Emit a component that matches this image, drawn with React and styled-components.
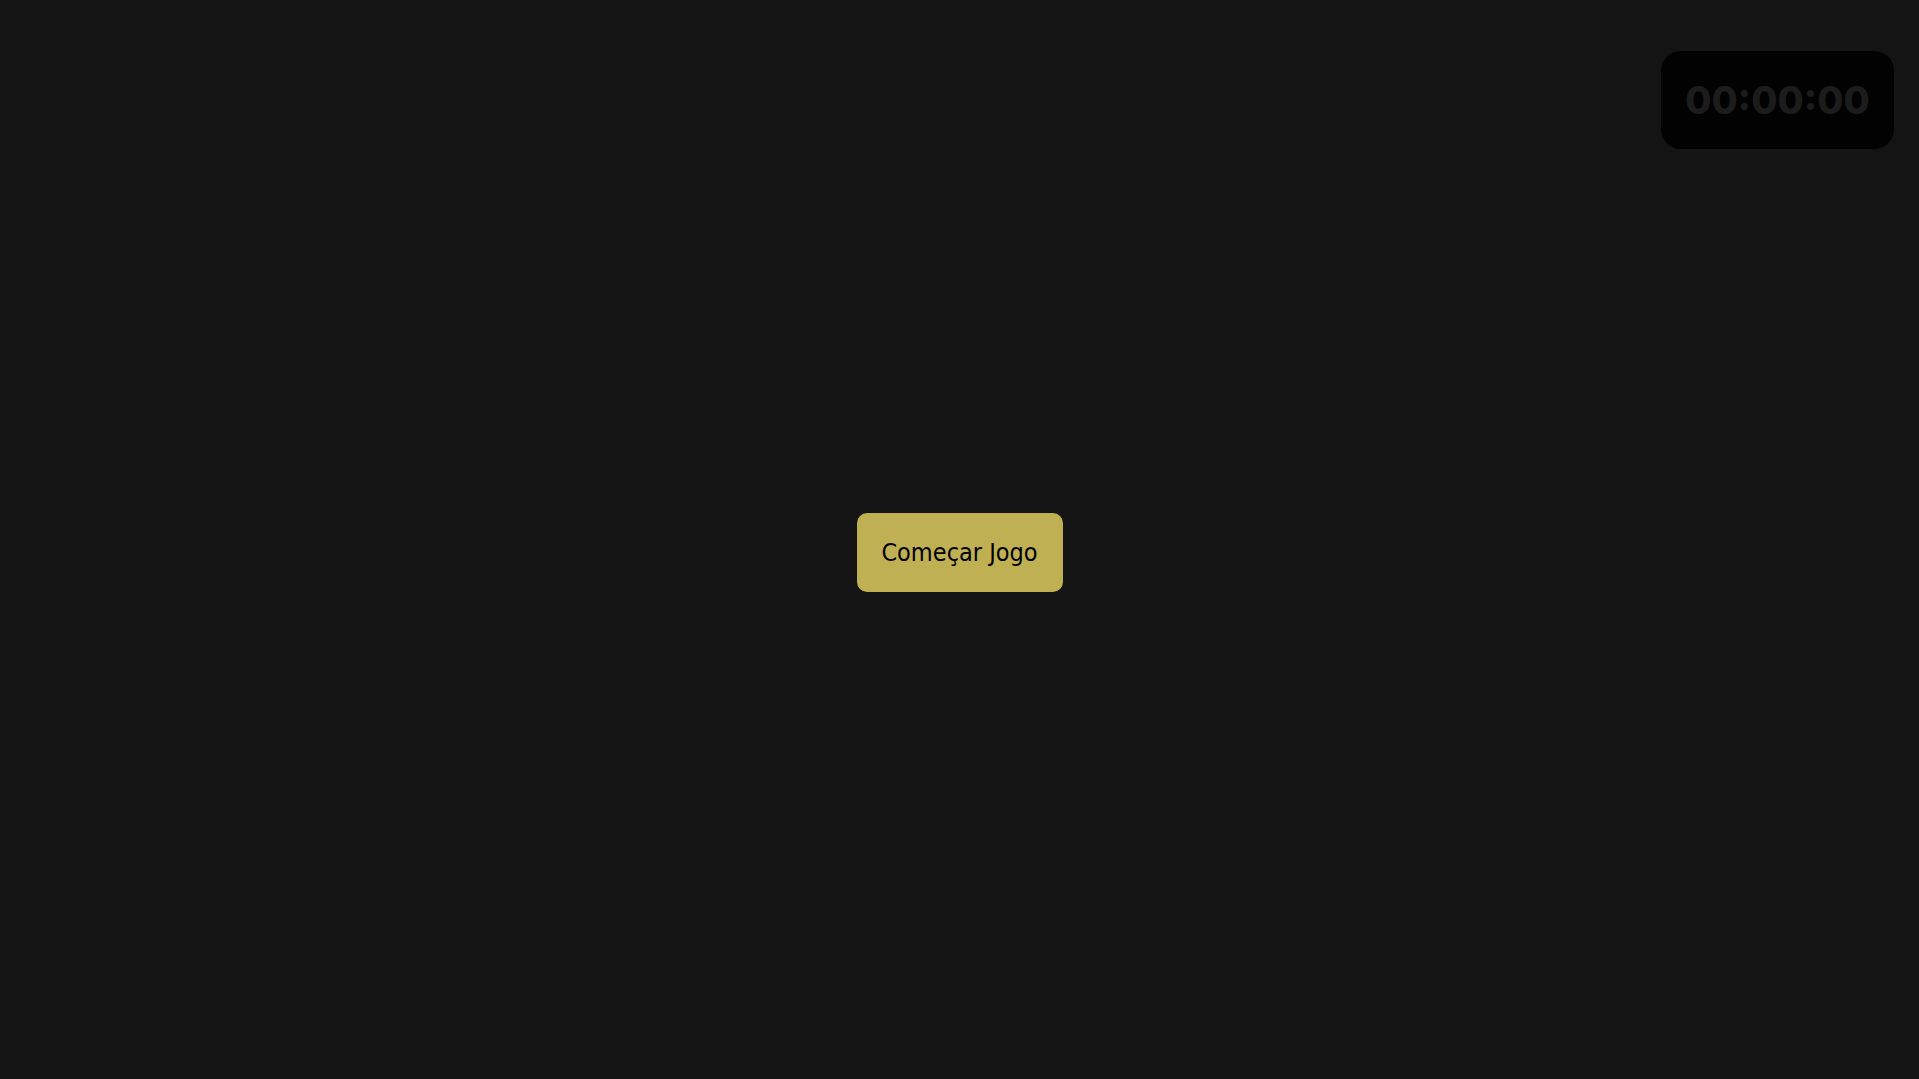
import React from 'react';
import styled, { createGlobalStyle } from 'styled-components';

const GlobalStyle = createGlobalStyle`
  html, body {
    margin: 0;
    padding: 0;
    background: #141414;
  }
`;

const Page = styled.main`
  min-height: 100vh;
  box-sizing: border-box;
  padding-top: 25px;
  display: flex;
  align-items: center;
  justify-content: center;
  background: #141414;
`;

const Timer = styled.div`
  position: fixed;
  top: 51px;
  right: 25px;
  width: 233px;
  height: 98px;
  box-sizing: border-box;
  display: flex;
  align-items: center;
  justify-content: center;
  background: #020202;
  border-radius: 20px;
  color: #1c1c1c;
  font-family: Inter, "DejaVu Sans", sans-serif;
  font-weight: 800;
  font-size: 38px;
`;

const StartButton = styled.button`
  width: 206px;
  height: 79px;
  border: none;
  border-radius: 10px;
  background: #bfb054;
  color: #000;
  font-family: "DejaVu Sans Condensed", "DejaVu Sans", sans-serif;
  font-size: 25px;
  cursor: pointer;
`;

function App() {
  return (
    <>
      <GlobalStyle />
      <Timer>00:00:00</Timer>
      <Page>
        <StartButton>Começar Jogo</StartButton>
      </Page>
    </>
  );
}

export default App;
